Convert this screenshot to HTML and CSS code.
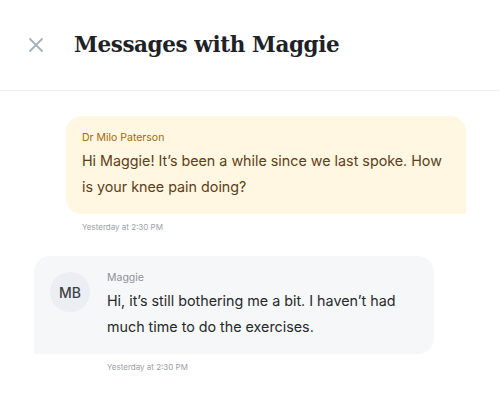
FILE: index.html
```
<!DOCTYPE html>
<html>
<head>
<meta charset="utf-8">
<link rel="stylesheet" href="styles.css">
</head>
<body>
<div class="page">
  <header class="header">
    <button class="close" aria-label="Close">
      <svg width="16" height="16" viewBox="0 0 16 16"><path d="M2 2L14 14M14 2L2 14" stroke="#A7AFB8" stroke-width="1.8" stroke-linecap="round" fill="none"/></svg>
    </button>
    <h1 class="title">Messages with Maggie</h1>
  </header>
  <main class="thread">
    <div class="msg msg-out">
      <div class="bubble bubble-out">
        <div class="sender sender-out">Dr Milo Paterson</div>
        <p class="text text-out">Hi Maggie! It’s been a while since we last spoke. How is your knee pain doing?</p>
      </div>
      <div class="time time-out">Yesterday at 2:30 PM</div>
    </div>
    <div class="msg msg-in">
      <div class="bubble bubble-in">
        <div class="avatar">MB</div>
        <div class="body">
          <div class="sender sender-in">Maggie</div>
          <p class="text text-in">Hi, it’s still bothering me a bit. I haven’t had much time to do the exercises.</p>
        </div>
      </div>
      <div class="time time-in">Yesterday at 2:30 PM</div>
    </div>
  </main>
</div>
</body>
</html>
```
FILE: styles.css
```
* { box-sizing: border-box; }
html, body { margin: 0; padding: 0; background: #fff; }
body { font-family: Inter, "Noto Sans", sans-serif; }
.page { width: 500px; }
.header {
  height: 91px;
  display: flex;
  align-items: center;
  border-bottom: 1px solid #ECEEF0;
  padding: 0 0 0 28px;
}
.close {
  border: 0; background: none; padding: 0;
  width: 16px; height: 16px;
  display: flex;
}
.title {
  margin: -2px 0 0 30px;
  font-family: "DejaVu Serif", serif;
  font-weight: bold;
  font-size: 21.5px;
  color: #1E2226;
  letter-spacing: -0.4px;
}
.thread {
  padding: 25px 34px 0;
  display: flex;
  flex-direction: column;
  gap: 24px;
}
.msg { display: flex; flex-direction: column; width: 400px; }
.msg-out { align-self: flex-end; }
.msg-in { align-self: flex-start; }
.bubble { border-radius: 16px; }
.bubble-out {
  background: #FFF7E2;
  border-bottom-right-radius: 0;
  padding: 16px 16px 14px;
}
.bubble-in {
  background: #F6F7F9;
  border-bottom-left-radius: 0;
  padding: 16px 16px 14px;
  display: flex;
  gap: 17px;
  align-items: flex-start;
}
.sender { font-size: 10.5px; line-height: 12px; margin-bottom: 4px; }
.sender-out { color: #A26A0C; }
.sender-in { color: #8C9298; }
.text { margin: 0; font-size: 14.3px; line-height: 26px; }
.text-out { color: #5E3E17; }
.text-in { color: #26292C; }
.avatar {
  flex: none;
  width: 40px; height: 40px; border-radius: 50%;
  background: #EBEEF2;
  color: #3D4247;
  font-size: 14px; font-weight: 500;
  display: flex; align-items: center; justify-content: center;
}
.body { flex: 1; }
.time { font-size: 8px; line-height: 10px; color: #9AA0A6; margin-top: 8px; }
.time-out { padding-left: 16px; }
.time-in { padding-left: 73px; }
```
